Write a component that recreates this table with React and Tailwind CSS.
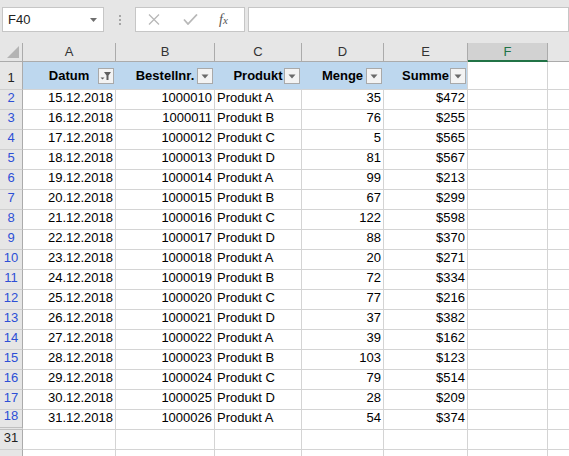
import React from 'react';

const rows = [
  ['15.12.2018', '1000010', 'Produkt A', '35', '$472'],
  ['16.12.2018', '1000011', 'Produkt B', '76', '$255'],
  ['17.12.2018', '1000012', 'Produkt C', '5', '$565'],
  ['18.12.2018', '1000013', 'Produkt D', '81', '$567'],
  ['19.12.2018', '1000014', 'Produkt A', '99', '$213'],
  ['20.12.2018', '1000015', 'Produkt B', '67', '$299'],
  ['21.12.2018', '1000016', 'Produkt C', '122', '$598'],
  ['22.12.2018', '1000017', 'Produkt D', '88', '$370'],
  ['23.12.2018', '1000018', 'Produkt A', '20', '$271'],
  ['24.12.2018', '1000019', 'Produkt B', '72', '$334'],
  ['25.12.2018', '1000020', 'Produkt C', '77', '$216'],
  ['26.12.2018', '1000021', 'Produkt D', '37', '$382'],
  ['27.12.2018', '1000022', 'Produkt A', '39', '$162'],
  ['28.12.2018', '1000023', 'Produkt B', '103', '$123'],
  ['29.12.2018', '1000024', 'Produkt C', '79', '$514'],
  ['30.12.2018', '1000025', 'Produkt D', '28', '$209'],
  ['31.12.2018', '1000026', 'Produkt A', '54', '$374'],
];

const cols = [
  { key: 'A', w: 'w-[93px]', title: 'Datum', align: 'justify-end' },
  { key: 'B', w: 'w-[99px]', title: 'Bestellnr.', align: 'justify-end' },
  { key: 'C', w: 'w-[87px]', title: 'Produkt', align: 'justify-start' },
  { key: 'D', w: 'w-[82px]', title: 'Menge', align: 'justify-end' },
  { key: 'E', w: 'w-[84px]', title: 'Summe', align: 'justify-end' },
];

const FilterButton = ({ active }) => (
  <div className="absolute right-[1px] top-[6px] w-[16px] h-[16px] bg-[#f3f3f3] border border-[#a9a9a9] flex items-center justify-center">
    {active ? (
      <svg width="12" height="10" viewBox="0 0 12 10">
        <path d="M4 1h7L8.5 4.5V9H6.5V4.5Z" fill="#5f5f5f" />
        <path d="M0.5 6.5h4L2.5 8.5Z" fill="#5f5f5f" />
      </svg>
    ) : (
      <svg width="8" height="5" viewBox="0 0 8 5">
        <path d="M0.5 0.5h7L4 4.5Z" fill="#6a6a6a" />
      </svg>
    )}
  </div>
);

const RowHeader = ({ n, blue, double }) => (
  <div
    className={`w-[23px] shrink-0 bg-[#e6e6e6] border-r border-[#ababab] flex items-end justify-center pb-[2px] ${
      double ? 'border-b-[3px] border-b-[#c0c0c0] border-double' : 'border-b border-b-[#cfcfcf]'
    } ${blue ? 'text-[#2d4fd6]' : 'text-[#222]'}`}
  >
    {n}
  </div>
);

export default function App() {
  return (
    <div className="w-[569px] h-[456px] overflow-hidden bg-white text-[13px] text-black" style={{ fontFamily: '"Liberation Sans", Arial, sans-serif' }}>
      {/* Formula bar */}
      <div className="h-[43px] bg-[#e6e6e6] flex items-start pt-[7px] pl-[2px]">
        <div className="w-[102px] h-[25px] bg-white border border-[#c6c6c6] flex items-center pl-[5px] pr-[6px] justify-between">
          <span className="text-[#222]">F40</span>
          <svg width="7" height="4" viewBox="0 0 7 4">
            <path d="M0 0h7L3.5 4Z" fill="#6e6e6e" />
          </svg>
        </div>
        <div className="w-[31px] h-[25px] flex flex-col items-center justify-center gap-[2px]">
          <span className="w-[2px] h-[2px] bg-[#a6a6a6]" />
          <span className="w-[2px] h-[2px] bg-[#a6a6a6]" />
          <span className="w-[2px] h-[2px] bg-[#a6a6a6]" />
        </div>
        <div className="w-[110px] h-[25px] bg-white border border-[#c6c6c6] flex items-center">
          <svg className="ml-[12px]" width="12" height="11" viewBox="0 0 12 11">
            <path d="M1 0.5l10 10M11 0.5l-10 10" stroke="#b8b8b8" strokeWidth="1.3" />
          </svg>
          <svg className="ml-[23px]" width="15" height="11" viewBox="0 0 15 11">
            <path d="M1 5.5l4 4.5L14 0.5" stroke="#b8b8b8" strokeWidth="1.8" fill="none" />
          </svg>
          <span className="ml-[21px] italic text-[#555] text-[14px] leading-none" style={{ fontFamily: '"Liberation Serif", serif' }}>
            f<span className="text-[11px]">x</span>
          </span>
        </div>
        <div className="flex-1 ml-[3px] h-[25px] bg-white border border-[#c6c6c6]" />
      </div>

      {/* Column headers */}
      <div className="flex h-[19px] bg-[#e6e6e6] text-[#333]">
        <div className="w-[23px] shrink-0 border-r border-b border-[#ababab] relative">
          <svg className="absolute right-[3px] bottom-[3px]" width="12" height="12" viewBox="0 0 12 12">
            <path d="M12 0V12H0Z" fill="#b4b4b4" />
          </svg>
        </div>
        {cols.map((c) => (
          <div key={c.key} className={`${c.w} shrink-0 border-r border-b border-[#ababab] flex items-center justify-center`}>
            {c.key}
          </div>
        ))}
        <div className="w-[80px] shrink-0 bg-[#d2d2d2] border-r border-[#ababab] border-b-2 border-b-[#217346] flex items-center justify-center text-[#217346]">
          F
        </div>
        <div className="flex-1 border-b border-[#ababab]" />
      </div>

      {/* Row 1 (headers with filter) */}
      <div className="flex h-[28px]">
        <RowHeader n="1" />
        {cols.map((c, i) => (
          <div
            key={c.key}
            className={`${c.w} shrink-0 relative bg-[#bdd7ee] border-b border-[#d4d4d4] ${i === 4 ? 'border-r' : 'border-r border-r-[#bdd7ee]'} flex items-end justify-center pb-[4px] font-bold`}
          >
            {c.title}
            <FilterButton active={i === 0} />
          </div>
        ))}
        <div className="w-[80px] shrink-0 border-r border-b border-[#d4d4d4]" />
        <div className="flex-1 border-b border-[#d4d4d4]" />
      </div>

      {/* Data rows */}
      {rows.map((r, idx) => (
        <div key={idx} className="flex h-[20px]">
          <RowHeader n={idx + 2} blue double={idx === rows.length - 1} />
          {cols.map((c, i) => (
            <div
              key={c.key}
              className={`${c.w} shrink-0 border-r border-b border-[#d4d4d4] flex items-end ${c.align} px-[2px] pb-[2px]`}
            >
              {r[i]}
            </div>
          ))}
          <div className="w-[80px] shrink-0 border-r border-b border-[#d4d4d4]" />
          <div className="flex-1 border-b border-[#d4d4d4]" />
        </div>
      ))}

      {/* Row 31 */}
      <div className="flex h-[20px]">
        <RowHeader n="31" />
        {cols.map((c) => (
          <div key={c.key} className={`${c.w} shrink-0 border-r border-b border-[#d4d4d4]`} />
        ))}
        <div className="w-[80px] shrink-0 border-r border-b border-[#d4d4d4]" />
        <div className="flex-1 border-b border-[#d4d4d4]" />
      </div>
      <div className="flex h-[20px]">
        <div className="w-[23px] shrink-0 bg-[#e6e6e6] border-r border-[#ababab]" />
        {cols.map((c) => (
          <div key={c.key} className={`${c.w} shrink-0 border-r border-[#d4d4d4]`} />
        ))}
        <div className="w-[80px] shrink-0 border-r border-[#d4d4d4]" />
      </div>
    </div>
  );
}
